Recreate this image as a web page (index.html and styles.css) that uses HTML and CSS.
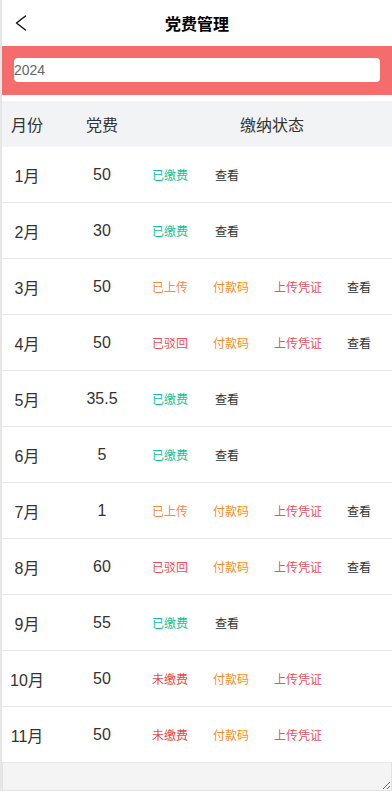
FILE: index.html
```html
<!DOCTYPE html>
<html lang="zh">
<head>
<meta charset="utf-8">
<title>党费管理</title>
<link rel="stylesheet" href="styles.css">
</head>
<body>
<div class="page">
  <div class="navbar">
    <span class="back">
      <svg width="12" height="16" viewBox="0 0 12 16"><path d="M10.5 1 L1.5 8 L10.5 15" fill="none" stroke="#111" stroke-width="1.4" stroke-linecap="round" stroke-linejoin="round"/></svg>
    </span>
    <span class="title">党费管理</span>
    <span></span>
  </div>
  <div class="search">
    <div class="input">2024</div>
  </div>
  <div class="table">
    <div class="row head">
      <div class="c1">月份</div>
      <div class="c2">党费</div>
      <div class="c3 center">缴纳状态</div>
    </div>
    <div class="row">
      <div class="c1">1月</div><div class="c2">50</div>
      <div class="c3"><span class="paid">已缴费</span><span class="view">查看</span></div>
    </div>
    <div class="row">
      <div class="c1">2月</div><div class="c2">30</div>
      <div class="c3"><span class="paid">已缴费</span><span class="view">查看</span></div>
    </div>
    <div class="row">
      <div class="c1">3月</div><div class="c2">50</div>
      <div class="c3"><span class="uploaded">已上传</span><span class="code">付款码</span><span class="upload">上传凭证</span><span class="view">查看</span></div>
    </div>
    <div class="row">
      <div class="c1">4月</div><div class="c2">50</div>
      <div class="c3"><span class="rejected">已驳回</span><span class="code">付款码</span><span class="upload">上传凭证</span><span class="view">查看</span></div>
    </div>
    <div class="row">
      <div class="c1">5月</div><div class="c2">35.5</div>
      <div class="c3"><span class="paid">已缴费</span><span class="view">查看</span></div>
    </div>
    <div class="row">
      <div class="c1">6月</div><div class="c2">5</div>
      <div class="c3"><span class="paid">已缴费</span><span class="view">查看</span></div>
    </div>
    <div class="row">
      <div class="c1">7月</div><div class="c2">1</div>
      <div class="c3"><span class="uploaded">已上传</span><span class="code">付款码</span><span class="upload">上传凭证</span><span class="view">查看</span></div>
    </div>
    <div class="row">
      <div class="c1">8月</div><div class="c2">60</div>
      <div class="c3"><span class="rejected">已驳回</span><span class="code">付款码</span><span class="upload">上传凭证</span><span class="view">查看</span></div>
    </div>
    <div class="row">
      <div class="c1">9月</div><div class="c2">55</div>
      <div class="c3"><span class="paid">已缴费</span><span class="view">查看</span></div>
    </div>
    <div class="row">
      <div class="c1">10月</div><div class="c2">50</div>
      <div class="c3"><span class="unpaid">未缴费</span><span class="code">付款码</span><span class="upload">上传凭证</span></div>
    </div>
    <div class="row">
      <div class="c1">11月</div><div class="c2">50</div>
      <div class="c3"><span class="unpaid">未缴费</span><span class="code">付款码</span><span class="upload">上传凭证</span></div>
    </div>
  </div>
  <textarea class="note"></textarea>
</div>
</body>
</html>
```
FILE: styles.css
```css
html, body {
  margin: 0;
  padding: 0;
  background: #fff;
  overflow: hidden;
}
body {
  font-family: "Liberation Sans", "Noto Sans CJK SC", sans-serif;
  color: #333;
}
.page {
  border-left: 2px solid #e6e6e6;
  min-height: 791px;
}
.navbar {
  height: 46px;
  display: grid;
  grid-template-columns: 46px 1fr 46px;
  align-items: center;
}
.back {
  display: flex;
  align-items: center;
  padding-left: 13px;
  height: 46px;
}
.title {
  text-align: center;
  font-size: 16px;
  font-weight: bold;
  color: #000;
}
.search {
  background: #f56c6c;
  padding: 12px 12px 13px 12px;
}
.input {
  background: #fff;
  height: 24px;
  border-radius: 4px;
  font-size: 14px;
  line-height: 24px;
  color: #666;
  padding-left: 0;
}
.table {
  margin-top: 6px;
}
.row {
  display: flex;
  align-items: center;
  height: 55px;
  border-bottom: 1px solid #e8e8e8;
  font-size: 16px;
}
.row.head {
  height: 46px;
  background: #f2f3f5;
  border-bottom: none;
}
.c1 {
  width: 50px;
  text-align: center;
}
.c2 {
  width: 100px;
  text-align: center;
}
.c3 {
  flex: 1;
  display: flex;
  align-items: center;
  gap: 25px;
  font-size: 12px;
}
.c3.center {
  justify-content: center;
  font-size: 16px;
}
.paid { color: #13c29b; margin-right: 2px; }
.uploaded { color: #f58a3f; }
.code { color: #fa8c16; }
.upload { color: #ef4f62; }
.rejected { color: #f04b55; }
.unpaid { color: #f04646; }
.view { color: #333; }
.note {
  display: block;
  box-sizing: border-box;
  width: 100%;
  height: 28px;
  margin: 0;
  border: 1px solid #e2e2e2;
  border-top: none;
  background: #f4f4f4;
  resize: vertical;
}
```
